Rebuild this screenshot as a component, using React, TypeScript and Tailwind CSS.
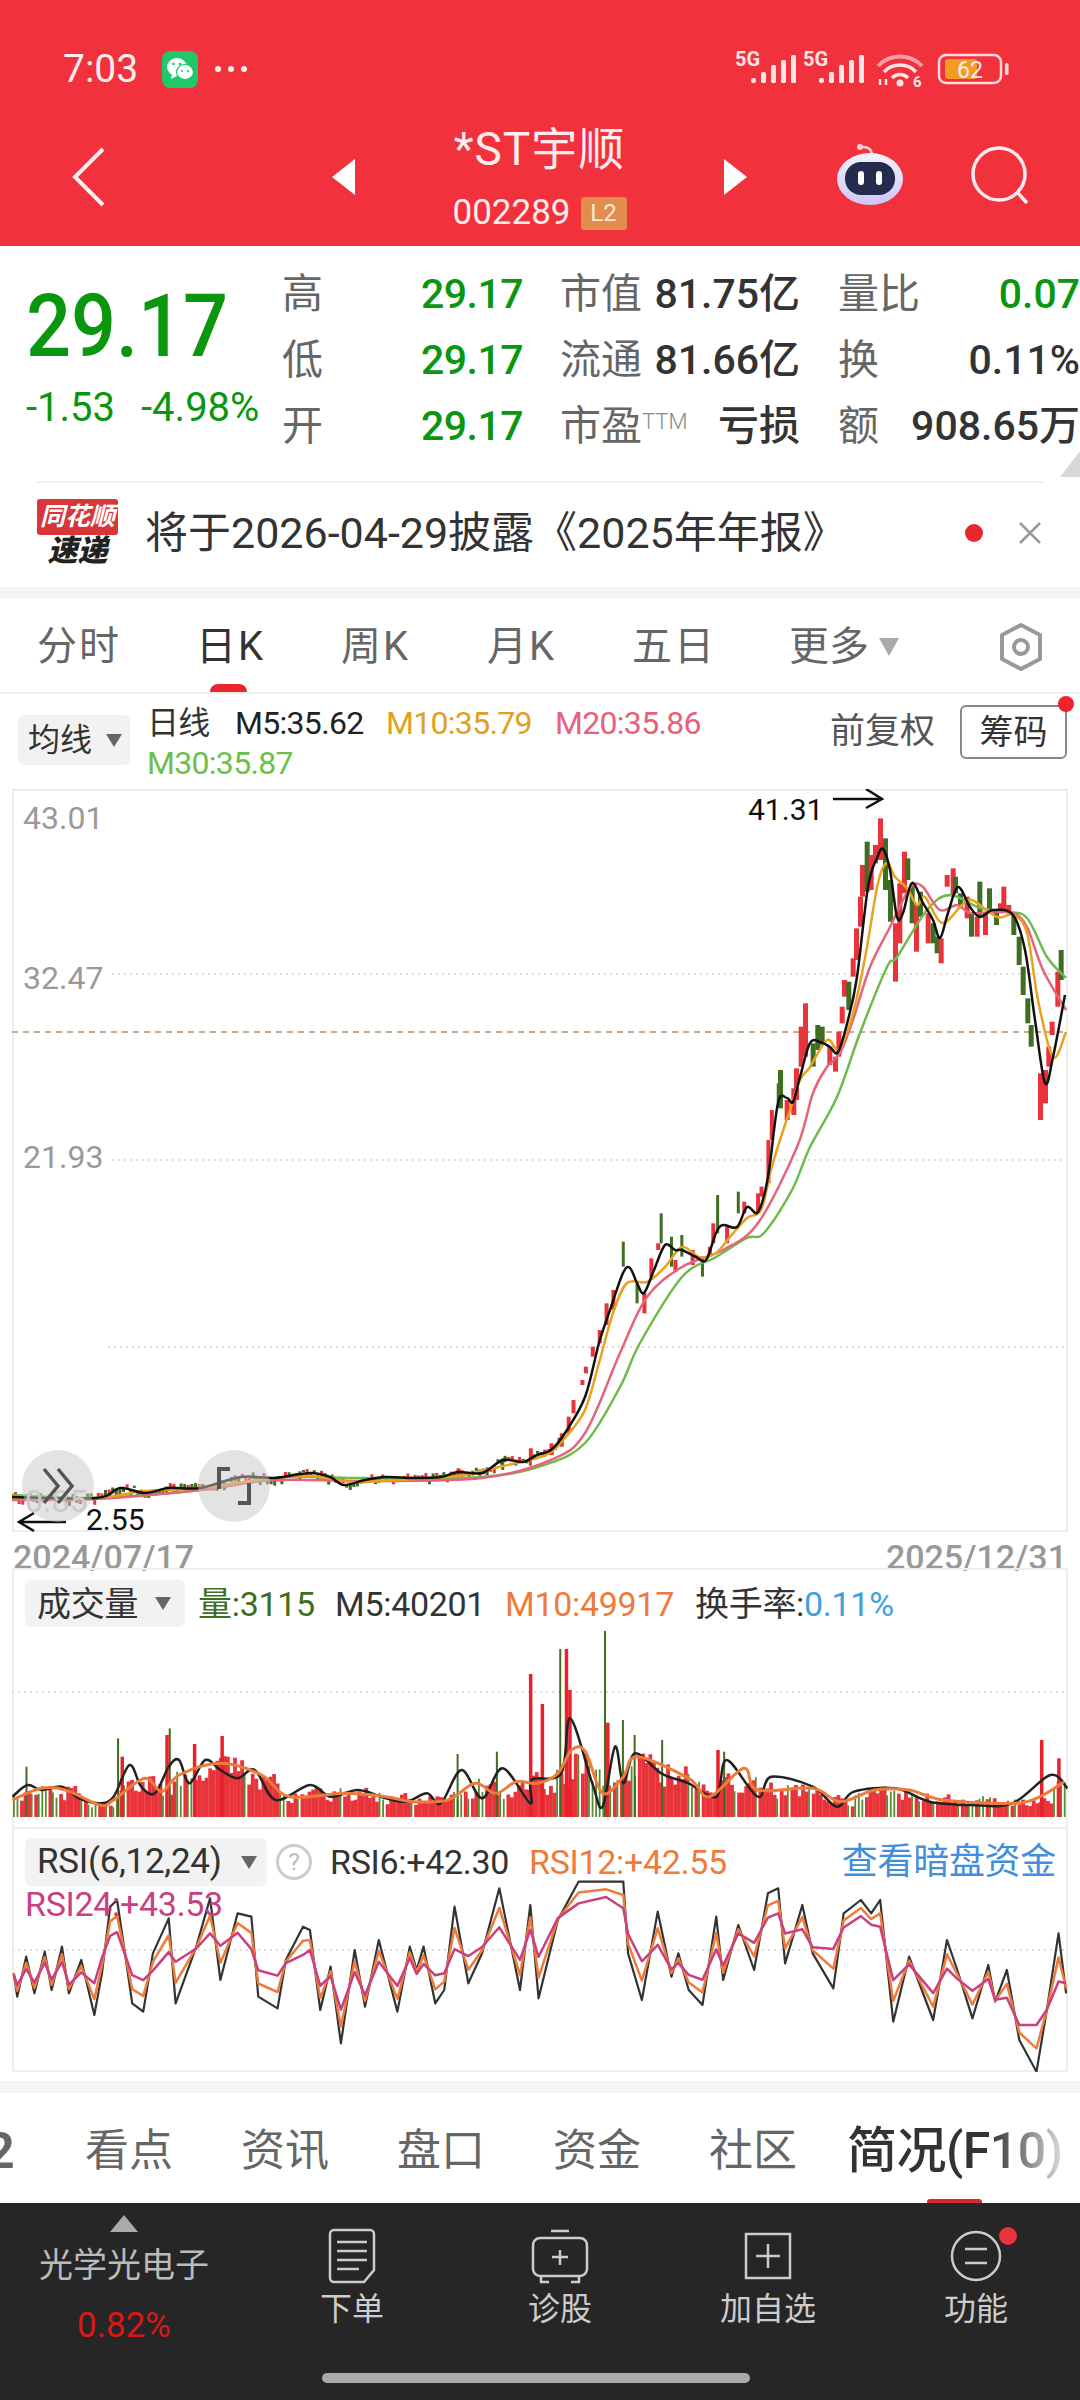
import React from "react";

type Pt = [number, number];

// traced price lines, page coordinates
const MA5: Pt[] = [[12,1497],[96,1498],[120,1488],[145,1493],[169,1488],[200,1488],[241,1477],[275,1478],[310,1473],[330,1477],[344,1485],[365,1480],[386,1477],[413,1478],[441,1477],[458,1472],[482,1473],[503,1460],[523,1462],[537,1455],[551,1450],[565,1433],[585,1397],[599,1343],[610,1310],[623,1273],[630,1268],[637,1283],[644,1293],[654,1270],[665,1245],[675,1250],[682,1250],[696,1257],[706,1260],[716,1233],[723,1225],[737,1227],[747,1207],[758,1212],[768,1177],[778,1103],[787,1098],[793,1102],[800,1077],[810,1043],[820,1042],[830,1047],[838,1052],[848,1020],[857,977],[868,887],[877,858],[883,849],[890,870],[897,917],[903,913],[912,883],[923,903],[933,920],[940,938],[948,913],[958,887],[970,907],[980,917],[993,910],[1013,915],[1025,950],[1035,1020],[1045,1083],[1053,1057],[1065,995]];
const MA10: Pt[] = [[12,1498],[96,1498],[145,1491],[200,1488],[275,1478],[310,1476],[344,1481],[365,1482],[413,1479],[458,1476],[503,1466],[537,1458],[551,1452],[565,1438],[585,1410],[599,1363],[613,1313],[627,1283],[647,1282],[665,1267],[682,1247],[699,1257],[716,1253],[730,1237],[747,1218],[761,1210],[771,1170],[780,1140],[790,1110],[800,1080],[810,1067],[827,1040],[838,1050],[848,1030],[857,997],[867,947],[878,883],[887,863],[895,877],[907,888],[917,905],[925,897],[942,923],[962,905],[972,900],[997,917],[1013,915],[1027,933],[1038,1000],[1053,1057],[1066,1032]];
const MA20: Pt[] = [[12,1500],[96,1499],[200,1490],[275,1480],[365,1481],[482,1478],[551,1460],[585,1433],[620,1353],[647,1297],[682,1267],[723,1250],[758,1223],[797,1147],[813,1093],[827,1067],[840,1053],[853,1020],[870,967],[890,927],[903,900],[913,885],[923,887],[940,910],[957,905],[970,913],[993,912],[1013,913],[1027,927],[1043,970],[1066,1010]];
const MA30: Pt[] = [[12,1495],[96,1498],[200,1490],[275,1478],[317,1477],[365,1478],[482,1477],[544,1465],[585,1443],[620,1387],[640,1343],[682,1277],[716,1257],[747,1238],[764,1233],[792,1190],[810,1147],[837,1097],[860,1033],[887,967],[897,957],[927,910],[950,895],[980,908],[1007,912],[1027,918],[1047,957],[1066,978]];

// x, top, bottom, colour: g or r, traced from the zoomed chart
const UPPER: [number, number, number, string][] = [[0,870,985,"g"],[20,960,1020,"r"],[40,925,1005,"r"],[48,865,960,"r"],[62,740,860,"r"],[75,670,830,"r"],[98,790,860,"g"],[112,735,810,"g"],[125,740,795,"g"],[148,800,855,"r"],[165,830,875,"r"],[175,755,830,"r"],[185,680,730,"r"],[192,600,650,"r"],[205,605,690,"g"],[218,535,590,"r"],[228,445,540,"r"],[240,350,440,"r"],[246,255,350,"r"],[260,185,335,"g"],[272,225,330,"r"],[285,195,250,"r"],[300,115,240,"r"],[315,175,330,"g"],[330,300,425,"g"],[345,430,605,"r"],[358,310,490,"r"],[372,215,340,"r"],[382,235,300,"g"],[395,310,430,"g"],[408,375,515,"r"],[420,335,410,"g"],[443,400,490,"r"],[458,430,490,"g"],[470,470,520,"g"],[482,475,550,"r"],[500,285,320,"r"],[518,265,350,"r"],[525,290,340,"g"],[540,340,385,"g"],[560,350,415,"r"],[573,400,470,"g"],[590,410,470,"r"],[598,305,410,"g"],[615,400,465,"r"],[627,325,400,"g"],[648,390,435,"g"],[660,370,400,"r"],[670,320,395,"r"],[685,375,400,"r"],[700,405,465,"g"],[716,470,555,"g"],[728,560,645,"g"],[742,655,730,"g"],[752,735,800,"g"],[780,880,1020,"r"],[795,870,970,"r"],[815,725,765,"r"],[805,800,860,"r"],[832,575,680,"r"],[842,510,600,"g"]];
const MIDDLE: [number, number, number, string][] = [[665,1165,1190,"r"],[730,1135,1170,"g"],[770,1105,1140,"r"],[800,1090,1125,"r"],[815,1060,1100,"r"],[825,1010,1060,"r"],[832,960,1000,"r"],[845,900,915,"r"],[850,860,880,"r"],[860,800,830,"r"],[870,750,790,"r"],[880,670,735,"r"],[890,630,690,"r"],[905,485,560,"g"],[925,610,670,"g"],[935,640,700,"r"],[945,535,590,"r"],[955,490,510,"r"],[960,400,490,"g"],[975,470,560,"g"],[980,540,575,"r"],[990,465,530,"g"],[1005,510,555,"r"],[1020,530,590,"g"],[1030,500,530,"r"],[1035,430,490,"r"],[1042,345,460,"g"],[1055,440,490,"r"],[1072,335,400,"g"],[1080,365,400,"r"],[1100,340,400,"r"],[1105,320,350,"r"],[1115,180,310,"r"],[1120,90,180,"r"],[1130,10,70,"g"]];

// zoom coordinates of the volume and RSI panels
const VOL5: Pt[] = [[18,680],[40,645],[60,660],[90,650],[115,685],[145,700],[165,680],[188,585],[205,650],[225,670],[245,590],[260,570],[275,640],[298,570],[320,600],[345,625],[370,600],[400,690],[450,645],[480,680],[520,660],[560,685],[590,695],[620,670],[640,700],[670,600],[700,685],[730,595],[770,700],[772,630],[815,610],[828,445],[860,640],[875,710],[893,530],[905,640],[922,550],[960,610],[1000,640],[1040,680],[1055,570],[1100,680],[1120,620],[1180,650],[1215,710],[1240,665],[1300,655],[1350,695],[1410,705],[1470,700],[1525,615],[1550,655]];
const VOL10: Pt[] = [[18,690],[60,655],[95,660],[145,705],[165,690],[210,625],[235,665],[260,615],[320,580],[380,615],[420,680],[500,670],[560,680],[600,695],[650,690],[690,640],[720,670],[750,635],[780,640],[810,610],[830,540],[850,545],[875,670],[905,620],[925,560],[1000,625],[1030,680],[1080,595],[1100,660],[1180,655],[1220,695],[1270,660],[1320,660],[1370,690],[1470,700],[1510,680],[1545,635]];
const SPIKES: [number, number, string][] = [[768,312,"r"],[785,402,"r"],[812,237,"g"],[820,237,"r"],[825,360,"r"],[877,183,"g"],[880,458,"r"],[903,450,"g"],[920,495,"g"],[960,510,"g"],[1510,510,"r"],[1535,565,"r"],[245,475,"g"],[240,495,"r"],[170,505,"g"],[175,560,"r"],[320,498,"r"],[280,522,"r"],[37,590,"g"],[663,552,"g"],[720,545,"g"],[1040,540,"r"],[1050,545,"g"]];
const RSI6: Pt[] = [[20,1210],[25,1280],[38,1160],[50,1270],[65,1145],[75,1260],[90,1130],[100,1270],[118,1170],[137,1335],[148,1210],[160,1010],[170,990],[180,1130],[192,1300],[208,1325],[222,1150],[245,1045],[255,1300],[285,1130],[305,985],[320,1230],[345,1030],[365,1040],[375,1280],[403,1315],[415,1170],[440,1070],[450,1080],[465,1320],[480,1190],[495,1420],[515,1140],[530,1310],[550,1110],[577,1325],[595,1130],[605,1200],[615,1130],[632,1300],[645,1260],[660,1010],[680,1240],[700,1150],[725,955],[755,1260],[770,1005],[782,1285],[810,1050],[840,935],[880,935],[905,935],[912,1150],[932,1290],[955,1025],[975,1220],[985,1150],[1000,1260],[1020,1305],[1040,1040],[1050,1230],[1072,1065],[1095,1200],[1115,970],[1130,955],[1140,1180],[1165,1005],[1180,1150],[1210,1255],[1225,1030],[1250,990],[1265,1030],[1278,990],[1297,1355],[1320,1160],[1355,1350],[1375,1110],[1390,1200],[1412,1345],[1435,1185],[1445,1295],[1462,1200],[1480,1410],[1505,1505],[1520,1320],[1537,1090],[1548,1270]];

const GREEN_C = "#3f6d22";
const RED_C = "#e8333a";

function smooth(p: Pt[]) {
  let d = `M${p[0][0]} ${p[0][1]}`;
  for (let i = 0; i < p.length - 1; i++) {
    const a = p[Math.max(i - 1, 0)];
    const b = p[i];
    const c = p[i + 1];
    const e = p[Math.min(i + 2, p.length - 1)];
    d += `C${b[0] + (c[0] - a[0]) / 6} ${b[1] + (c[1] - a[1]) / 6} ${c[0] - (e[0] - b[0]) / 6} ${c[1] - (e[1] - b[1]) / 6} ${c[0]} ${c[1]}`;
  }
  return d;
}

const straight = (p: Pt[]) => p.map((q) => q.join(",")).join(" ");

function interp(p: Pt[], x: number) {
  for (let i = 0; i < p.length - 1; i++) {
    if (x <= p[i + 1][0]) {
      const t = (x - p[i][0]) / (p[i + 1][0] - p[i][0] || 1);
      return p[i][1] + (p[i + 1][1] - p[i][1]) * t;
    }
  }
  return p[p.length - 1][1];
}

function rng(seed: number) {
  let s = seed;
  return () => {
    s = (s * 16807) % 2147483647;
    return s / 2147483647;
  };
}

const volPt = ([x, y]: Pt): Pt => [x / 1.452, 1570 + y / 3];

function PriceChart() {
  const r = rng(41);
  const flat = [];
  for (let x = 14; x < 560; x += 3.6) {
    const y = interp(MA5, x) + (r() - 0.5) * 6;
    flat.push(
      <rect key={x} x={x} y={y - 2} width={3} height={2 + r() * 6} fill={r() > 0.55 ? RED_C : GREEN_C} />
    );
  }
  return (
    <svg viewBox="12 789 1056 743" className="absolute left-[-2px] top-[-2px] w-[1056px] h-[743px]">
      <line x1="112" x2="1066" y1="974" y2="974" stroke="#ddd" strokeWidth="2" strokeDasharray="2 4" />
      <line x1="112" x2="1066" y1="1160" y2="1160" stroke="#ddd" strokeWidth="2" strokeDasharray="2 4" />
      <line x1="108" x2="1066" y1="1347" y2="1347" stroke="#ddd" strokeWidth="2" strokeDasharray="2 4" />
      <line x1="12" x2="1066" y1="1032" y2="1032" stroke="#c9ab8a" strokeWidth="2" strokeDasharray="6 5" />
      {flat}
      {MIDDLE.map(([x, t, b, c]) => (
        <rect key={x} x={x / 1.452 - 1.5} y={1080 + t / 3} width={c === "g" ? 3 : 4} height={(b - t) / 3} fill={c === "g" ? GREEN_C : RED_C} />
      ))}
      {UPPER.map(([x, t, b, c]) => (
        <rect key={x} x={780 + x / 3 - 2} y={780 + t / 3} width={5} height={(b - t) / 3} fill={c === "g" ? GREEN_C : RED_C} />
      ))}
      <path d={smooth(MA30)} fill="none" stroke="#6dbb4a" strokeWidth="2.5" />
      <path d={smooth(MA20)} fill="none" stroke="#e5647c" strokeWidth="2.5" />
      <path d={smooth(MA10)} fill="none" stroke="#e8a21e" strokeWidth="2.5" />
      <path d={smooth(MA5)} fill="none" stroke="#111" strokeWidth="2.5" />
      <path d="M833 799H881M866 789l16 10-16 9" fill="none" stroke="#111" strokeWidth="2.5" />
      <path d="M66 1522H20M34 1513l-15 9 15 9" fill="none" stroke="#111" strokeWidth="2.5" />
    </svg>
  );
}

function VolumeChart() {
  const r = rng(97);
  const ma = VOL10.map(volPt);
  const bars = [];
  let red = true;
  let prev = 20;
  for (let x = 13; x < 1066; x += 3.55) {
    red = red ? r() > 0.22 : r() > 0.45;
    const base = 1817 - interp(ma, x);
    const h = base * (0.45 + r() * 1.1) * 0.6 + prev * 0.4;
    prev = h;
    bars.push(
      <rect key={x} x={x} y={1817 - h} width={red ? 3.8 : 1.8} height={h} fill={red ? RED_C : "#5a8a38"} />
    );
  }
  return (
    <svg viewBox="12 1568 1056 259" className="absolute left-[-2px] top-[-2px] w-[1056px] h-[259px]">
      <line x1="12" x2="1066" y1="1692" y2="1692" stroke="#ddd" strokeWidth="2" strokeDasharray="2 4" />
      {bars}
      {SPIKES.map(([x, t, c]) => (
        <rect key={x} x={x / 1.452} y={1570 + t / 3} width={c === "g" ? 2 : 3.5} height={1817 - 1570 - t / 3} fill={c === "g" ? GREEN_C : "#e8222a"} />
      ))}
      <path d={smooth(VOL5.map(volPt))} fill="none" stroke="#222" strokeWidth="2.5" />
      <path d={smooth(VOL10.map(volPt))} fill="none" stroke="#ee7b3a" strokeWidth="3" />
    </svg>
  );
}

function RsiChart() {
  // slower lines follow the fast one with a moving average
  const slow = (mix: number) =>
    RSI6.map(([x, y], i) => {
      const w = RSI6.slice(Math.max(i - 2, 0), i + 3);
      const avg = w.reduce((s, p) => s + p[1], 0) / w.length;
      return volPt([x, y * (1 - mix) + avg * mix]);
    });
  return (
    <svg viewBox="12 1827 1056 245" className="absolute left-[-2px] top-[-2px] w-[1056px] h-[245px]">
      <line x1="12" x2="1066" y1="1950" y2="1950" stroke="#ddd" strokeWidth="2" strokeDasharray="2 4" />
      <polyline points={straight(RSI6.map(volPt))} fill="none" stroke="#333" strokeWidth="2.2" strokeLinejoin="round" />
      <polyline points={straight(slow(0.35))} fill="none" stroke="#ee7b3a" strokeWidth="2.5" strokeLinejoin="round" />
      <polyline points={straight(slow(0.7))} fill="none" stroke="#c8407f" strokeWidth="2.5" strokeLinejoin="round" />
    </svg>
  );
}

function StatusIcons() {
  const signal = (dx: number) => (
    <g transform={`translate(${dx} 0)`} fill="#ffe3e5">
      <text x="735" y="66" fontSize="20" fontWeight="700">5G</text>
      <rect x="751" y="78" width="5" height="5" rx="2" />
      <rect x="761" y="72" width="5" height="11" rx="1.5" />
      <rect x="771" y="65" width="5" height="18" rx="1.5" />
      <rect x="781" y="60" width="5" height="23" rx="1.5" />
      <rect x="791" y="55" width="5" height="28" rx="1.5" />
    </g>
  );
  return (
    <svg viewBox="733 44 277 46" className="w-[277px] h-[46px] mb-[4px]">
      {signal(0)}
      {signal(68)}
      <path d="M878 66a30 30 0 0 1 44 0" fill="none" stroke="#f9a0a4" strokeWidth="4" />
      <path d="M884 72a22 22 0 0 1 32 0" fill="none" stroke="#ffe3e5" strokeWidth="3.5" />
      <path d="M892 78a11 11 0 0 1 16 0" fill="none" stroke="#ffe3e5" strokeWidth="3.5" />
      <circle cx="900" cy="83" r="3.5" fill="#ffe3e5" />
      <path d="M880 79v6M886 79v6" stroke="#ffe3e5" strokeWidth="2.5" />
      <text x="913" y="87" fontSize="15" fontWeight="700" fill="#ffe3e5">6</text>
      <rect x="939" y="55" width="62" height="28" rx="7" fill="none" stroke="#ffd9dc" strokeWidth="2.5" />
      <rect x="945" y="59" width="32" height="20" rx="3" fill="#f59a23" />
      <text x="957" y="78" fontSize="23" fill="#ffeef0">62</text>
      <rect x="1005" y="63" width="3.5" height="12" rx="1.5" fill="#ffd9dc" />
    </svg>
  );
}

function Robot() {
  return (
    <svg viewBox="0 0 66 62" className="w-[66px] h-[62px]">
      <defs>
        <linearGradient id="robotBody" x1="0" y1="0" x2="0" y2="1">
          <stop offset="0" stopColor="#f4f3fb" />
          <stop offset="1" stopColor="#cfc6f4" />
        </linearGradient>
      </defs>
      <path d="M24 4Q34 3 35 11" fill="none" stroke="#f7cdd0" strokeWidth="2.5" />
      <circle cx="23" cy="4" r="3" fill="#f7cdd0" />
      <ellipse cx="33" cy="36" rx="33" ry="26" fill="url(#robotBody)" />
      <rect x="8" y="19" width="50" height="33" rx="16" fill="#232c4d" />
      <rect x="21" y="28" width="6" height="14" rx="3" fill="#fff" />
      <rect x="39" y="28" width="6" height="14" rx="3" fill="#fff" />
    </svg>
  );
}

function Header() {
  return (
    <div className="h-[246px] bg-[#f1313c] text-[#ffecee] flex flex-col shrink-0">
      <div className="flex items-center justify-between pt-[48px] pl-[63px] pr-[70px] h-[90px]">
        <div className="flex items-center">
          <span className="text-[39px] leading-[40px] w-[99px]">7:03</span>
          <div className="w-[36px] h-[37px] rounded-[8px] bg-[#1fc96a] flex items-center justify-center">
            <svg viewBox="0 0 36 37" className="w-[36px] h-[37px]">
              <ellipse cx="15" cy="16" rx="10" ry="9" fill="#fff" />
              <path d="M10 23l-1 5 6-3z" fill="#fff" />
              <ellipse cx="23" cy="21" rx="8.5" ry="7.5" fill="#fff" stroke="#1fc96a" strokeWidth="1.2" />
              <circle cx="11.5" cy="13" r="1.3" fill="#1fc96a" />
              <circle cx="18" cy="13" r="1.3" fill="#1fc96a" />
              <circle cx="20" cy="20" r="1.1" fill="#1fc96a" />
              <circle cx="26" cy="20" r="1.1" fill="#1fc96a" />
            </svg>
          </div>
          <div className="flex gap-[7px] ml-[17px]">
            <span className="w-[6px] h-[6px] rounded-full bg-[#ffecee]" />
            <span className="w-[6px] h-[6px] rounded-full bg-[#ffecee]" />
            <span className="w-[6px] h-[6px] rounded-full bg-[#ffecee]" />
          </div>
        </div>
        <StatusIcons />
      </div>
      <div className="flex items-center flex-1 pt-[18px]">
        <svg viewBox="0 0 34 60" className="w-[34px] h-[60px] ml-[72px]">
          <path d="M31 2L3 30l28 28" fill="none" stroke="#ffecee" strokeWidth="4" />
        </svg>
        <div className="w-0 h-0 ml-[226px] border-y-[18px] border-y-transparent border-r-[23px] border-r-white" />
        <div className="w-[369px] flex flex-col items-center">
          <div className="text-[46px] leading-[52px] tracking-[1px]">*ST宇顺</div>
          <div className="flex items-center gap-[10px] mt-[20px]">
            <span className="text-[35px] leading-[36px]">002289</span>
            <span className="w-[46px] h-[33px] rounded-[3px] bg-[#e28d4e] text-[#fbe6d4] text-[24px] leading-[33px] text-center">L2</span>
          </div>
        </div>
        <div className="w-0 h-0 border-y-[18px] border-y-transparent border-l-[23px] border-l-white" />
        <div className="ml-[90px] mb-[6px]">
          <Robot />
        </div>
        <svg viewBox="0 0 58 60" className="w-[58px] h-[60px] ml-[68px] mb-[2px]">
          <circle cx="28" cy="28" r="26" fill="none" stroke="#ffecee" strokeWidth="3.5" />
          <path d="M46 46l10 11" stroke="#ffecee" strokeWidth="3.5" />
        </svg>
      </div>
    </div>
  );
}

const GREEN_T = "text-[#0a960f]";

function QuoteRow({ a, b, c, d, dClass }: { a: string; b: React.ReactNode; c: string; d: string; dClass: string }) {
  return (
    <div className="flex items-center h-[66px] text-[41px] leading-[48px]">
      <span className="w-[41px] text-[#666]">{a}</span>
      <span className={`w-[200px] text-right font-medium tracking-[-0.5px] ${GREEN_T}`}>29.17</span>
      <span className="ml-[37px] w-[240px] flex justify-between items-center">{b}</span>
      <span className="ml-[38px] w-[242px] flex justify-between items-center">
        <span className="text-[#666]">{c}</span>
        <span className={`font-medium whitespace-nowrap ${dClass}`}>{d}</span>
      </span>
    </div>
  );
}

function Quote() {
  return (
    <div className="h-[341px] bg-white flex flex-col shrink-0 relative">
      <div className="flex h-[235px]">
        <div className="w-[282px] pl-[26px] pt-[30px] shrink-0">
          <div className={`text-[88px] leading-[100px] font-medium origin-left scale-x-[0.9] ${GREEN_T}`}>29.17</div>
          <div className={`flex gap-[26px] mt-[11px] text-[40px] leading-[42px] ${GREEN_T}`}>
            <span>-1.53</span>
            <span>-4.98%</span>
          </div>
        </div>
        <div className="pt-[15px]">
          <QuoteRow a="高" c="量比" d="0.07" dClass={GREEN_T} b={<>
            <span className="text-[#666]">市值</span>
            <span className="font-medium text-[#333]">81.75亿</span>
          </>} />
          <QuoteRow a="低" c="换" d="0.11%" dClass="text-[#333]" b={<>
            <span className="text-[#666]">流通</span>
            <span className="font-medium text-[#333]">81.66亿</span>
          </>} />
          <QuoteRow a="开" c="额" d="908.65万" dClass="text-[#333]" b={<>
            <span className="text-[#666]">市盈<sup className="text-[22px] font-light text-[#888]">TTM</sup></span>
            <span className="font-medium text-[#333]">亏损</span>
          </>} />
        </div>
      </div>
      <div className="absolute right-0 top-[205px] w-0 h-0 border-b-[26px] border-b-[#d8d8d8] border-l-[20px] border-l-transparent" />
      <div className="mx-[35px] border-t-2 border-[#f0f0f0]" />
      <div className="flex items-center flex-1 pl-[37px] pr-[38px] pb-[4px]">
        <div className="w-[81px] flex flex-col items-center shrink-0">
          <div className="w-[81px] h-[36px] bg-[#d9363a] rounded-[3px] text-white text-[25px] leading-[36px] font-bold italic text-center">同花顺</div>
          <div className="text-[#222] text-[30px] leading-[32px] font-black italic">速递</div>
        </div>
        <div className="ml-[27px] text-[43px] leading-[50px] text-[#333] whitespace-nowrap">将于2026-04-29披露《2025年年报》</div>
        <div className="flex-1" />
        <span className="w-[18px] h-[18px] rounded-full bg-[#e8272f]" />
        <svg viewBox="0 0 24 24" className="w-[24px] h-[24px] ml-[35px]">
          <path d="M2 2l20 20M22 2L2 22" stroke="#999" strokeWidth="2.5" />
        </svg>
      </div>
    </div>
  );
}

function Tabs() {
  const cls = "text-[40px] leading-[48px] text-[#666] tracking-[2px]";
  return (
    <div className="h-[96px] bg-white border-b-2 border-[#ececec] relative flex items-center pl-[37px] pt-[3px] shrink-0">
      <span className={`${cls} w-[159px]`}>分时</span>
      <span className="w-[145px] text-[40px] leading-[48px] text-[#333] tracking-[2px]">日K</span>
      <span className={`${cls} w-[146px]`}>周K</span>
      <span className={`${cls} w-[145px]`}>月K</span>
      <span className={`${cls} w-[157px]`}>五日</span>
      <span className="text-[40px] leading-[48px] text-[#666]">更多</span>
      <span className="ml-[10px] w-0 h-0 border-x-[10px] border-x-transparent border-t-[18px] border-t-[#aaa]" />
      <svg viewBox="0 0 44 50" className="w-[44px] h-[50px] ml-[100px]">
        <path d="M22 3l19 10v24L22 47 3 37V13z" fill="none" stroke="#999" strokeWidth="4" strokeLinejoin="round" />
        <circle cx="22" cy="25" r="7" fill="none" stroke="#999" strokeWidth="4" />
      </svg>
      <div className="absolute left-[210px] bottom-0 w-[37px] h-[8px] rounded-t-full rounded-b-[2px] bg-[#e8272f]" />
    </div>
  );
}

function Chip({ children, className }: { children: React.ReactNode; className: string }) {
  return (
    <div className={`flex items-center justify-between rounded-[6px] bg-[#f2f2f2] shrink-0 whitespace-nowrap ${className}`}>
      {children}
      <span className="w-0 h-0 border-x-[8px] border-x-transparent border-t-[13px] border-t-[#666]" />
    </div>
  );
}

function ChartHeader() {
  return (
    <div className="h-[95px] bg-white flex items-start pl-[18px] pr-[13px] shrink-0">
      <Chip className="w-[112px] h-[50px] mt-[21px] pl-[10px] pr-[8px] text-[32px] text-[#333]">均线</Chip>
      <div className="ml-[17px] pt-[9px] text-[32px] leading-[40px]">
        <div className="flex whitespace-nowrap tracking-[-0.7px]">
          <span className="text-[#333] w-[88px]">日线</span>
          <span className="text-[#222] w-[151px]">M5:35.62</span>
          <span className="text-[#e0a020] w-[169px]">M10:35.79</span>
          <span className="text-[#e9607a]">M20:35.86</span>
        </div>
        <div className="text-[#6cc04a] tracking-[-0.7px]">M30:35.87</div>
      </div>
      <div className="flex-1" />
      <span className="mt-[16px] text-[35px] leading-[44px] text-[#555]">前复权</span>
      <div className="relative ml-[25px] mt-[11px] w-[107px] h-[54px] border-2 border-[#888] rounded-[6px] text-center text-[34px] leading-[50px] text-[#333]">
        筹码
        <span className="absolute right-[-9px] top-[-11px] w-[16px] h-[16px] rounded-full bg-[#f0222c]" />
      </div>
    </div>
  );
}

function MainChart() {
  const axis = "absolute left-[9px] text-[32px] leading-[36px] text-[#999]";
  const round = "absolute top-[659px] w-[72px] h-[72px] rounded-full bg-[#c8c8c8]/50 flex items-center justify-center";
  return (
    <div className="relative mx-[12px] h-[743px] border-2 border-[#eee] shrink-0">
      <PriceChart />
      <span className={`${axis} top-[9px]`}>43.01</span>
      <span className={`${axis} top-[169px]`}>32.47</span>
      <span className={`${axis} top-[348px]`}>21.93</span>
      <span className="absolute left-[11px] top-[694px] text-[32px] leading-[32px] text-[#ccc]">0.85</span>
      <span className="absolute left-[734px] top-[1px] text-[30px] leading-[36px] text-[#111]">41.31</span>
      <span className="absolute left-[72px] top-[714px] text-[30px] leading-[30px] text-[#111]">2.55</span>
      <div className={`${round} left-[8px]`}>
        <svg viewBox="0 0 36 40" className="w-[36px] h-[40px]">
          <path d="M4 3l14 17L4 37M18 3l14 17-14 17" fill="none" stroke="#555" strokeWidth="3.5" />
        </svg>
      </div>
      <div className={`${round} left-[184px]`}>
        <svg viewBox="0 0 40 40" className="w-[40px] h-[40px]">
          <path d="M16 3H5v20M35 17v20H24" fill="none" stroke="#555" strokeWidth="4" />
        </svg>
      </div>
    </div>
  );
}

function VolumePanel() {
  return (
    <div className="relative mx-[12px] h-[259px] border-x-2 border-t-2 border-[#eee] shrink-0">
      <VolumeChart />
      <div className="relative flex items-center pl-[11px] pt-[10px] text-[34px] leading-[46px] whitespace-nowrap tracking-[-0.3px]">
        <Chip className="w-[160px] h-[47px] pl-[12px] pr-[14px] text-[34px] text-[#333]">成交量</Chip>
        <span className="ml-[13px] w-[137px] text-[#3f6d22]">量:3115</span>
        <span className="w-[170px] text-[#333]">M5:40201</span>
        <span className="w-[190px] text-[#ee7b3a]">M10:49917</span>
        <span className="text-[#333]">换手率:</span>
        <span className="text-[#3fa0dc]">0.11%</span>
      </div>
    </div>
  );
}

function RsiPanel() {
  return (
    <div className="relative mx-[12px] h-[245px] border-x-2 border-y-2 border-[#eee] shrink-0">
      <RsiChart />
      <div className="relative flex items-center pl-[11px] pt-[9px] pr-[10px] text-[34px] leading-[46px] whitespace-nowrap tracking-[-0.3px]">
        <Chip className="w-[242px] h-[48px] pl-[12px] pr-[10px] text-[35px] text-[#333]">RSI(6,12,24)</Chip>
        <span className="ml-[9px] w-[36px] h-[36px] rounded-full border-[3px] border-[#ccc] text-[#bbb] text-[24px] leading-[30px] text-center">?</span>
        <span className="ml-[18px] w-[199px] text-[#333]">RSI6:+42.30</span>
        <span className="text-[#ee7b3a]">RSI12:+42.55</span>
        <span className="flex-1" />
        <span className="text-[36px] text-[#3f8fdc]">查看暗盘资金</span>
      </div>
      <span className="relative block ml-[11px] text-[34px] leading-[36px] tracking-[-0.3px] text-[#c8407f]">RSI24:+43.53</span>
    </div>
  );
}

function BottomTabs() {
  const cls = "text-[44px] leading-[50px] text-[#666] w-[156px]";
  return (
    <div className="h-[110px] bg-white relative flex items-center pl-[85px] pt-[6px] shrink-0 overflow-hidden">
      <span className="absolute left-[-14px] text-[50px] font-bold text-[#666]">2</span>
      <span className={cls}>看点</span>
      <span className={cls}>资讯</span>
      <span className={cls}>盘口</span>
      <span className={cls}>资金</span>
      <span className="text-[44px] leading-[50px] text-[#666] w-[138px]">社区</span>
      <span className="text-[50px] leading-[56px] font-medium whitespace-nowrap tracking-[-0.5px] bg-gradient-to-r from-[#333] from-[65%] to-[#ddd] bg-clip-text text-transparent">简况(F10)</span>
      <div className="absolute left-[927px] bottom-0 w-[55px] h-[4px] rounded-t-[3px] bg-[#d8282f]" />
    </div>
  );
}

function DockItem({ label, children }: { label: string; children: React.ReactNode }) {
  return (
    <div className="relative w-[208px] flex flex-col items-center pt-[24px]">
      <div className="h-[58px] flex items-center justify-center">{children}</div>
      <span className="mt-[4px] text-[32px] leading-[40px] text-[#ccc]">{label}</span>
    </div>
  );
}

function Dock() {
  const s = { fill: "none", stroke: "#ccc", strokeWidth: 2.5 };
  return (
    <div className="flex-1 bg-[#262626] relative flex items-start">
      <div className="w-[248px] flex flex-col items-center pt-[12px]">
        <span className="w-0 h-0 border-x-[14px] border-x-transparent border-b-[17px] border-b-[#aaa]" />
        <span className="mt-[12px] text-[34px] leading-[42px] text-[#bbb]">光学光电子</span>
        <span className="mt-[20px] text-[35px] leading-[40px] text-[#d8181c]">0.82%</span>
      </div>
      <DockItem label="下单">
        <svg viewBox="0 0 48 56" className="w-[48px] h-[56px]">
          <path d="M6 2h36a4 4 0 0 1 4 4v36L36 54H6a4 4 0 0 1-4-4V6a4 4 0 0 1 4-4z" {...s} />
          <path d="M9 14h30M9 23h30M9 32h30M9 41h22" {...s} />
        </svg>
      </DockItem>
      <DockItem label="诊股">
        <svg viewBox="0 0 58 56" className="w-[58px] h-[56px]">
          <path d="M20 3h18" {...s} />
          <rect x="2" y="10" width="54" height="38" rx="7" {...s} />
          <path d="M29 22v15M21 29h16" {...s} />
          <path d="M10 48v6h8M48 48v6h-8" {...s} />
        </svg>
      </DockItem>
      <DockItem label="加自选">
        <svg viewBox="0 0 48 48" className="w-[48px] h-[48px]">
          <rect x="2" y="2" width="44" height="44" {...s} />
          <path d="M24 12v24M12 24h24" {...s} />
        </svg>
      </DockItem>
      <DockItem label="功能">
        <svg viewBox="0 0 52 52" className="w-[52px] h-[52px]">
          <circle cx="26" cy="26" r="24" {...s} />
          <path d="M15 19h22M15 33h22" {...s} />
        </svg>
        <span className="absolute left-[127px] top-[24px] w-[18px] h-[18px] rounded-full bg-[#e8333a]" />
      </DockItem>
      <div className="absolute left-[322px] top-[170px] w-[428px] h-[10px] rounded-full bg-[#aaa]" />
    </div>
  );
}

export default function App() {
  return (
    <div className="w-[1080px] h-[2400px] bg-white flex flex-col overflow-hidden font-['Roboto','Noto_Sans_CJK_SC',sans-serif]">
      <Header />
      <Quote />
      <div className="h-[11px] bg-[#f4f4f4] shrink-0" />
      <Tabs />
      <ChartHeader />
      <MainChart />
      <div className="h-[36px] flex items-start justify-between pt-[14px] px-[13px] text-[34px] leading-[22px] font-medium text-[#999] shrink-0">
        <span>2024/07/17</span>
        <span>2025/12/31</span>
      </div>
      <VolumePanel />
      <RsiPanel />
      <div className="h-[9px] shrink-0" />
      <div className="h-[12px] bg-[#f4f4f4] shrink-0" />
      <BottomTabs />
      <Dock />
    </div>
  );
}
